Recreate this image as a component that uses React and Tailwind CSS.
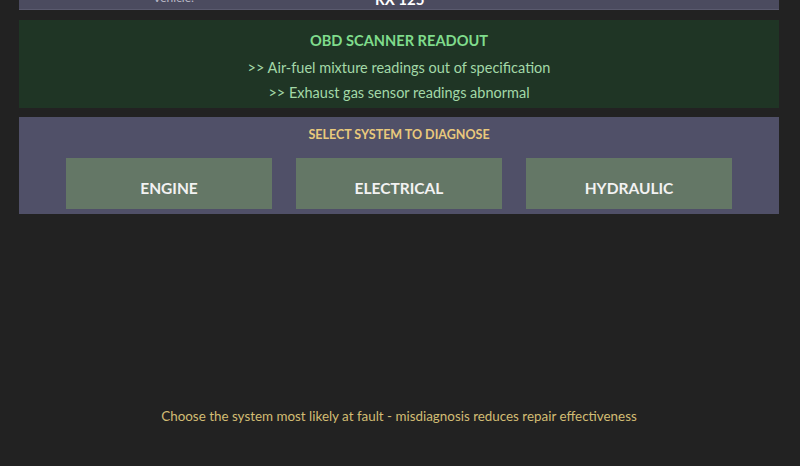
export default function App() {
  const font = { fontFamily: "Lato, 'Open Sans', sans-serif" };
  return (
    <div className="w-[800px] h-[466px] overflow-hidden bg-[#222222] flex flex-col pl-[19px] pr-[21px]" style={font}>
      <div className="mt-[-30px] h-[40px] shrink-0 bg-[#4b4b5f] border-b border-[#5a5a6e] flex items-end">
        <div className="w-[134px]" />
        <div className="w-[222px] text-[12px] leading-[12px] text-[#b9b9c6] mb-[5px]">Vehicle:</div>
        <div className="text-[15px] leading-[15px] font-bold text-white mb-[2px]">RX 125</div>
      </div>
      <div className="mt-[10px] h-[88px] shrink-0 bg-[#1f3525] flex flex-col items-center pt-[12px]">
        <div className="text-[14.6px] font-bold text-[#7fdc8c] leading-[18px]">OBD SCANNER READOUT</div>
        <div className="mt-[9px] text-[14.5px] text-[#a3d9a8] leading-[18px]">&gt;&gt; Air-fuel mixture readings out of specification</div>
        <div className="mt-[7px] text-[14.5px] text-[#a3d9a8] leading-[18px]">&gt;&gt; Exhaust gas sensor readings abnormal</div>
      </div>
      <div className="mt-[9px] h-[97px] shrink-0 bg-[#505068] flex flex-col items-center pt-[10px]">
        <div className="text-[12.5px] font-bold text-[#e9c97c] leading-[16px]">SELECT SYSTEM TO DIAGNOSE</div>
        <div className="mt-[15px] flex gap-[24px]">
          {["ENGINE", "ELECTRICAL", "HYDRAULIC"].map((t) => (
            <div key={t} className="w-[206px] h-[51px] bg-[#647766] flex items-center justify-center pt-[10px] text-[15.5px] font-bold text-[#f2f2f2]">
              {t}
            </div>
          ))}
        </div>
      </div>
      <div className="mt-[192px] text-center text-[13.4px] text-[#d2bd74]">
        Choose the system most likely at fault - misdiagnosis reduces repair effectiveness
      </div>
    </div>
  );
}
